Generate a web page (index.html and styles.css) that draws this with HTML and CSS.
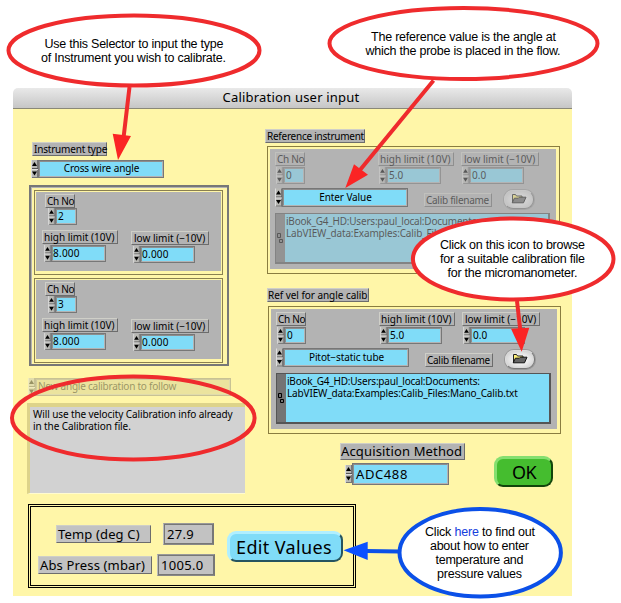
FILE: index.html
```html
<!DOCTYPE html>
<html lang="en">
<head>
<meta charset="utf-8">
<title>Calibration user input</title>
<link rel="stylesheet" href="styles.css">
</head>
<body>
<svg class="defs" width="0" height="0" aria-hidden="true">
  <symbol id="spin" viewBox="0 0 7 18"><path d="M0 0h7v18H0z" fill="#b8b8b4"/><path d="M6.5 0v18M0 17.5h7" stroke="#777"/><path d="M0 8.5h7" stroke="#555"/><path d="M0 9.5h7M.5 0v18" stroke="#ddd"/><path d="M1 6l2.5-4L6 6zM1 11.5h5l-2.5 4z" fill="#000"/></symbol>
  <symbol id="folder" viewBox="0 0 16 11"><path d="M1.500 9.500V1.500h3l1 1.500h5.500v2.500" fill="#fff27a" stroke="#222"/><path d="M1.200 9.800l2.200-4.600h4l1-1h6.600l-2.500 5.600z" fill="#666" stroke="#111"/></symbol>
</svg>
<main class="window">
  <header class="titlebar">Calibration user input</header>
  <div class="content">
    <div class="columns">
      <section class="left">
        <div class="label inst-label">Instrument type</div>
        <div class="ctl inst"><svg><use href="#spin"/></svg><span class="field center">Cross wire angle</span></div>
        <div class="array">
          <div class="channel">
            <div class="label ch">Ch No</div>
            <div class="ctl chv"><svg><use href="#spin"/></svg><span class="field">2</span></div>
            <div class="limits">
              <div class="high"><div class="label">high limit (10V)</div><div class="ctl"><svg><use href="#spin"/></svg><span class="field">8.000</span></div></div>
              <div class="low"><div class="label">low limit (−10V)</div><div class="ctl"><svg><use href="#spin"/></svg><span class="field">0.000</span></div></div>
            </div>
          </div>
          <div class="channel">
            <div class="label ch">Ch No</div>
            <div class="ctl chv"><svg><use href="#spin"/></svg><span class="field">3</span></div>
            <div class="limits">
              <div class="high"><div class="label">high limit (10V)</div><div class="ctl"><svg><use href="#spin"/></svg><span class="field">8.000</span></div></div>
              <div class="low"><div class="label">low limit (−10V)</div><div class="ctl"><svg><use href="#spin"/></svg><span class="field">0.000</span></div></div>
            </div>
          </div>
        </div>
        <div class="ctl follow"><svg><use href="#spin"/></svg><span class="field">New angle calibration to follow</span></div>
        <div class="info">Will use the velocity Calibration info already<br><span class="l2">in the Calibration file.</span></div>
      </section>
      <section class="right">
        <div class="label ref-label">Reference instrument</div>
        <div class="panel disabled">
          <div class="trio">
            <div class="c1"><div class="label ch">Ch No</div><div class="ctl"><svg><use href="#spin"/></svg><span class="field">0</span></div></div>
            <div class="high"><div class="label">high limit (10V)</div><div class="ctl"><svg><use href="#spin"/></svg><span class="field">5.0</span></div></div>
            <div class="low"><div class="label">low limit (−10V)</div><div class="ctl"><svg><use href="#spin"/></svg><span class="field">0.0</span></div></div>
          </div>
          <div class="source"><div class="ctl"><svg><use href="#spin"/></svg><span class="field center">Enter Value</span></div><div class="label file">Calib filename</div><div class="browse"><svg><use href="#folder"/></svg></div></div>
          <div class="path"><span class="tab"><svg viewBox="0 0 8 12"><path d="M1.500 1.500h3v4h-3zM3.500 7.500h3v3h-3z" fill="none" stroke="#000"/></svg></span><p><span class="p1">iBook_G4_HD:Users:paul_local:Documents:</span><br><span class="p2">LabVIEW_data:Examples:Calib_Files:Mano_Calib.txt</span></p></div>
        </div>
        <div class="label vel-label">Ref vel for angle calib</div>
        <div class="panel second">
          <div class="trio">
            <div class="c1"><div class="label ch">Ch No</div><div class="ctl"><svg><use href="#spin"/></svg><span class="field">0</span></div></div>
            <div class="high"><div class="label">high limit (10V)</div><div class="ctl"><svg><use href="#spin"/></svg><span class="field">5.0</span></div></div>
            <div class="low"><div class="label">low limit (−10V)</div><div class="ctl"><svg><use href="#spin"/></svg><span class="field">0.0</span></div></div>
          </div>
          <div class="source"><div class="ctl"><svg><use href="#spin"/></svg><span class="field center">Pitot−static tube</span></div><div class="label file">Calib filename</div><div class="browse"><svg><use href="#folder"/></svg></div></div>
          <div class="path"><span class="tab"><svg viewBox="0 0 8 12"><path d="M1.500 1.500h3v4h-3zM3.500 7.500h3v3h-3z" fill="none" stroke="#000"/></svg></span><p><span class="p1">iBook_G4_HD:Users:paul_local:Documents:</span><br><span class="p2">LabVIEW_data:Examples:Calib_Files:Mano_Calib.txt</span></p></div>
        </div>
        <div class="actions">
          <div class="acq"><div class="label">Acquisition Method</div><div class="ctl"><svg><use href="#spin"/></svg><span class="field">ADC488</span></div></div>
          <button class="ok">OK</button>
        </div>
      </section>
    </div>
    <section class="ambient">
      <div class="readings">
        <div class="reading temp"><span class="label">Temp (deg C)</span><span class="value">27.9</span></div>
        <div class="reading press"><span class="label">Abs Press (mbar)</span><span class="value">1005.0</span></div>
      </div>
      <button class="edit">Edit Values</button>
    </section>
  </div>
</main>
<svg class="callouts" viewBox="0 0 621 603">
  <g class="red">
    <ellipse cx="134" cy="50.500" rx="125.500" ry="35"/>
    <ellipse cx="463.500" cy="43.500" rx="134" ry="35.500"/>
    <ellipse cx="513.200" cy="259" rx="100.300" ry="40.500"/>
    <ellipse class="open" cx="133.300" cy="418" rx="121.300" ry="41.500"/>
    <path d="M129.500 87L123.500 138M433.500 80.500L360 170M517 301L520.500 332"/>
    <path class="head" d="M112.700 133.800L131 136L118 160zM354 164.300L368 174.800L345.300 188zM511 328.700L529.300 327.700L521.700 351.700z"/>
  </g>
  <g class="blue">
    <ellipse cx="480.200" cy="552.800" rx="80.700" ry="43.700"/>
    <path d="M399 551.500L366 551"/>
    <path class="head" d="M367.700 541.700V560L343.500 550.300z"/>
  </g>
  <g class="note">
    <text x="44.500" y="48" textLength="179">Use this Selector to input the type</text>
    <text x="41" y="62" textLength="185">of Instrument you wish to calibrate.</text>
    <text x="371" y="41" textLength="185">The reference value is the angle at</text>
    <text x="365.500" y="55" textLength="195">which the probe is placed in the flow.</text>
    <text x="440" y="249" textLength="145">Click on this icon to browse</text>
    <text x="440" y="263" textLength="145">for a suitable calibration file</text>
    <text x="447.500" y="277" textLength="130">for the micromanometer.</text>
    <text x="425" y="536" textLength="110">Click <tspan class="link">here</tspan> to find out</text>
    <text x="430" y="550" textLength="99">about how to enter</text>
    <text x="435.500" y="564" textLength="88">temperature and</text>
    <text x="437" y="578" textLength="85">pressure values</text>
  </g>
</svg>
</body>
</html>
```
FILE: styles.css
```css
* { box-sizing: border-box; }
body { margin: 0; width: 621px; height: 603px; background: #fff; overflow: hidden; position: relative; font: 10px/13px "Noto Sans", sans-serif; color: #000; }
.defs { position: absolute; }
p { margin: 0; }
.window { width: 559px; margin: 88px 0 0 12.5px; }
.titlebar { height: 21px; padding-right: 2px; border-radius: 5px 5px 0 0; background: linear-gradient(#e9e9e9, #c6c6c6); border-bottom: 1px solid #8a8878; font-size: 13px; line-height: 19px; text-align: center; letter-spacing: .2px; }
.content { height: 487px; background: #fff6a8; }
.columns { display: flex; height: 395px; }
.left { width: 252.500px; padding: 33px 0 0 14.500px; }
.right { padding-top: 20px; }

.label { width: max-content; height: 14px; line-height: 12px; padding: 0 1px; white-space: nowrap; background: #b3b3b3; border: 1px solid; border-color: #cfcfc8 #6c6c6c #6c6c6c #cfcfc8; }
.ctl { display: flex; height: 17px; }
.ctl svg { width: 7px; height: 100%; flex: none; }
.field { display: block; width: 55px; height: 100%; padding-left: 1px; line-height: 13px; white-space: nowrap; background: #80dcf8; border: 2px solid; border-color: #8d8d8d #b3b3b3 #b3b3b3 #8d8d8d; outline: 1px solid #777; outline-offset: -1px; }
.limits .field { letter-spacing: .25px; padding-left: 0; }
.center { text-align: center; letter-spacing: -.1px; }
.ch { width: 30px; letter-spacing: -.3px; }
.high .label { width: 76px; }
.low .label { width: 78px; padding-left: 2px; }

.inst-label { width: 75px; margin-left: 5px; letter-spacing: -.2px; }
.inst { margin: 4px 0 0 4px; height: 18px; }
.inst .field { width: 126px; }
.array { width: 200px; height: 181px; margin: 7px 0 0 2px; border: 2px solid #777; padding: 2px; background: #fff6a8; box-shadow: inset 1px 1px #b3b3b3; }
.channel { height: 87px; width: 191px; padding: 2px 0 0 8px; border: 3px solid #fff6a8; border-width: 3px 3px 5px; background: #b3b3b3; outline: 1px solid #8a8050; outline-offset: -2px; }
.channel + .channel { margin-top: 1px; }
.chv { margin: 0 0 0 4px; }
.channel .ch { margin-left: 1px; }
.chv .field { width: 22px; }
.limits { display: flex; margin-top: 5px; }
.limits .high { width: 89px; margin-left: -2px; }
.limits .ctl { margin: 1px 0 0 2px; }
.limits .low { padding-top: 1px; }
.follow { width: 204px; height: 18px; margin: 12px 0 0 1px; opacity: .4; }
.follow .field { width: 196px; background: #cfc990; letter-spacing: -.23px; }
.info { width: 218px; height: 91px; margin-top: 7px; padding: 1px 0 0 3px; line-height: 12px; white-space: nowrap; letter-spacing: -.1px; background: #d2d2d2; border: solid #ddd38a; border-width: 4px 0 0 3px; border-bottom: 1px solid #fffbd0; }

.ref-label { width: 100px; letter-spacing: -.25px; }
.panel { width: 293px; height: 128px; margin: 3px 0 0 2px; padding: 3px 0 0 5px; background: #b3b3b3; border: solid #fff6a8; border-width: 3px 4px 5px 3px; outline: 1px solid #8a7d40; outline-offset: -1px; }
.trio { display: flex; height: 36px; }
.trio .ctl { margin: 1px 0 0 1px; }
.trio .c1 { width: 103px; }
.trio .c1 .field { width: 22px; }
.trio .high { width: 83px; }
.source { display: flex; height: 25px; }
.source .ctl { height: 19px; }
.source .field { width: 126px; line-height: 15px; }
.file { width: 68px; margin: 5px 0 0 16px; letter-spacing: -.28px; }
.browse { display: flex; justify-content: center; align-items: center; width: 30px; height: 19px; margin: 2px 0 0 12px; border-radius: 9px; background: radial-gradient(#f4f4f4 30%, #c4c4c4); border: 1px solid; border-color: #ddd #777 #777 #ddd; box-shadow: 0 0 0 1px #999; }
.browse svg { width: 16px; height: 11px; margin-top: -3px; }
.path { display: flex; width: 275px; height: 51px; border: solid #555; border-width: 1px 2px 2px 1px; background: #80dcf8; line-height: 12px; white-space: nowrap; }
.tab { width: 9px; flex: none; background: #747474; padding-top: 18px; }
.tab svg { display: block; width: 8px; height: 12px; }
.path p { padding: 1px 0 0 1px; }
.p1 { letter-spacing: -.21px; }
.p2 { letter-spacing: -.15px; }
.disabled .trio, .disabled .file, .disabled .browse, .disabled .path { opacity: .5; }
.vel-label { width: 102px; margin: 14px 0 0 2px; letter-spacing: -.05px; padding: 0; }
.second { margin: 4px 0 0 3px; }
.actions { display: flex; padding-top: 9px; }
.acq { margin-left: 75px; width: 154px; }
.acq .label { width: 125px; height: 17px; font-size: 13px; line-height: 14px; letter-spacing: .15px; padding: 0; }
.acq .ctl { height: 22px; margin: 3px 0 0 5px; }
.acq .field { width: 97px; font-size: 13px; line-height: 18px; padding-left: 2px; letter-spacing: .6px; }
button { padding: 0; font-family: "Noto Sans", sans-serif; color: #000; }
.ok { width: 59px; height: 31px; margin-top: 13px; border-radius: 9px; background: #45bd2f; border: solid; border-width: 3px 2px 2px 3px; border-color: #85df70 #12450b #12450b #85df70; font-size: 18px; line-height: 22px; letter-spacing: -.6px; }

.ambient { display: flex; width: 328px; height: 84px; margin-left: 15.500px; padding: 16px 0 0 7px; border: 3px double #000; }
.readings { width: 189px; }
.reading { display: flex; align-items: center; height: 22px; font-size: 13px; }
.reading .label { height: 18px; line-height: 16px; background: #c2c2c2; letter-spacing: .15px; }
.reading .value { height: 22px; line-height: 18px; padding-left: 2px; letter-spacing: .3px; border: 2px solid; border-color: #999 #777 #888 #bbb; outline: 1px solid #777; outline-offset: -2px; background: #c2c2c2; }
.temp { padding-left: 18px; }
.temp .label { width: 95px; margin-right: 12px; }
.temp .value { width: 51px; }
.press { margin-top: 9px; }
.press .label { width: 114px; margin-right: 5px; }
.press .value { width: 58px; }
.edit { width: 116px; height: 31px; margin-top: 8px; border-radius: 9px; background: #80dcf8; border: solid; border-width: 3px 2px 2px 3px; border-color: #b0efff #26545f #26545f #b0efff; font-size: 18px; line-height: 22px; letter-spacing: .35px; padding-right: 3px; white-space: nowrap; }

.callouts { position: absolute; left: 0; top: 0; width: 621px; height: 603px; }
.callouts ellipse { fill: #fff; stroke-width: 4; }
.callouts .open { fill: none; }
.callouts path { stroke-width: 4; }
.callouts .head { stroke: none; }
.red { stroke: #ef2b2d; }
.red .head { fill: #fb2424; }
.blue { stroke: #0b50e8; }
.blue .head { fill: #0b50ff; }
.note { font: 12.500px "Liberation Sans", sans-serif; fill: #000; }
.note text { stroke: none; }
.link { fill: #1540dd; }
```
